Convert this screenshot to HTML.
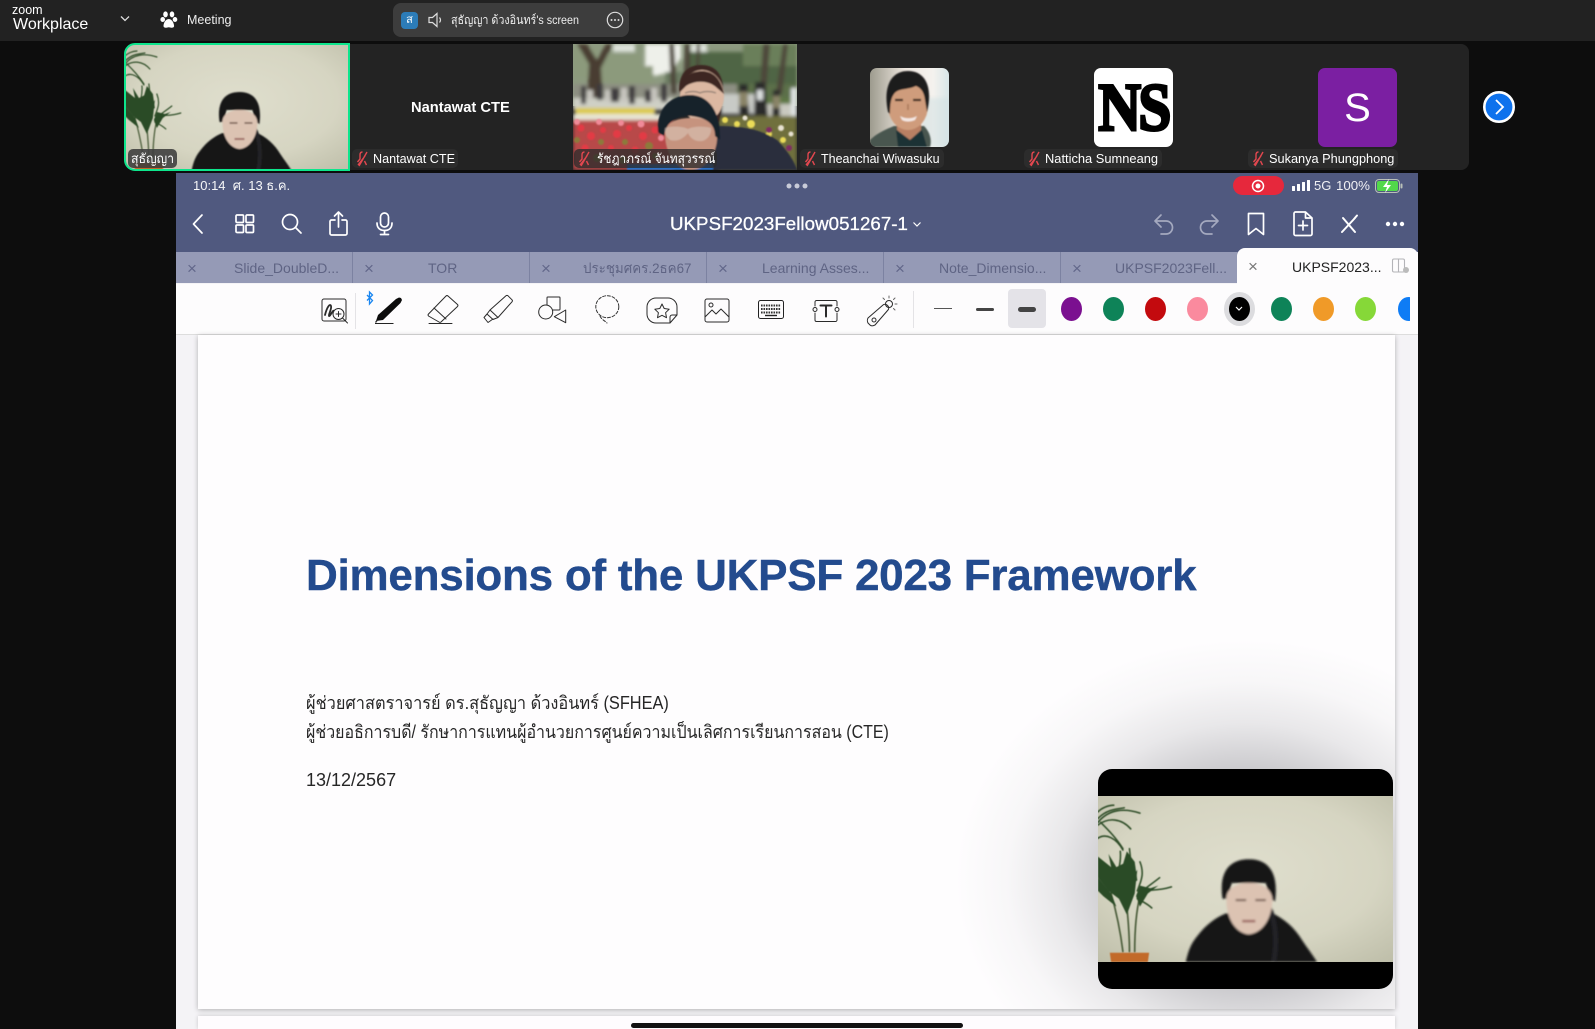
<!DOCTYPE html>
<html lang="en"><head><meta charset="utf-8"><title>Zoom Workplace</title>
<style>
*{box-sizing:border-box}
html,body{margin:0;padding:0;width:1595px;height:1029px;overflow:hidden;background:#0d0d0d;font-family:"Liberation Sans","Noto Sans CJK SC",sans-serif}
.a{position:absolute;white-space:nowrap}
svg{position:absolute;overflow:visible}
.lb{position:absolute;top:149px;height:19px;background:#2c2c2c;border-radius:5px;color:#fff;font-size:13px;line-height:19px;white-space:nowrap}
.lb svg{left:3px;top:2px}
.lb span{position:absolute;left:21px;top:0;transform-origin:left center}
.tab{position:absolute;top:252px;height:31px;width:177px;background:#959ab6;border-right:1px solid #7c82a1;color:#5f6484;font-size:14px;line-height:32px}
.tab i{position:absolute;left:11px;top:1px;font-style:normal;font-size:17px;color:#62678a}
.tab span{position:absolute;white-space:nowrap;top:0}
.dot{position:absolute;width:21px;height:24px;top:297px;border-radius:50%}
.ic{fill:none;stroke:#fff;stroke-width:1.7;stroke-linecap:round;stroke-linejoin:round}
.tb{fill:none;stroke:#2a2a2a;stroke-width:1;stroke-linecap:round;stroke-linejoin:round}
</style></head><body>
<svg width="0" height="0" style="position:absolute"><defs>
<radialGradient id="wall" cx=".5" cy=".45" r=".75"><stop offset="0" stop-color="#dfdecd"/><stop offset=".6" stop-color="#d6d5c2"/><stop offset="1" stop-color="#bdbda8"/></radialGradient>
<filter id="b1"><feGaussianBlur stdDeviation=".8"/></filter>
<filter id="b0"><feGaussianBlur stdDeviation=".45"/></filter>
<filter id="b2"><feGaussianBlur stdDeviation="1.900"/></filter>
<symbol id="video" viewBox="0 0 225 126" preserveAspectRatio="none">
<rect width="225" height="126" fill="url(#wall)"/>
<g filter="url(#b0)">
<g fill="none" stroke="#4d5f3c" stroke-width="1.300" stroke-linecap="round">
<path d="M19 118C17 102 14 88 10 74M24 118C24 104 23 94 22 84M28 118C28 102 29 88 32 76"/></g>
<g fill="none" stroke="#31502b" stroke-linecap="round" stroke-width="1.200">
<path d="M0 20C8 10 20 9 32 13M0 22C8 16 18 17 25 25M0 12C3 9 8 7 12 7M0 17C6 11 12 10 20 9M0 32C6 28 14 32 19 41M2 20C8 26 14 32 19 40"/>
<path d="M10 74C14 62 18 52 17 42M22 80C24 66 26 54 24 40M30 78C34 68 40 74 56 69M30 75C36 70 42 66 47 62M30 78C34 80 38 82 41 85M30 72C32 66 36 60 32 50"/></g>
<g fill="#2c4c27">
<path d="M0 46L10 54L8 44L14 54L22 50L26 62L30 56L28 74L22 90L16 78L8 72L0 62Z"/>
<path d="M0 62L10 74L14 84L4 76L0 72Z"/><path d="M22 42L28 50L30 64L24 68L19 52Z"/>
<path d="M32 68L40 70L46 68L38 74L32 84L29 76Z"/>
</g>
<path d="M9 119H39L38 126H10Z" fill="#c26b2b"/>
</g>
<g filter="url(#b1)">
<path d="M67 126C69 117 71 112 76 106C82 98 90 92 98 89L131 88C142 93 150 100 156 110C160 116 164 121 167 126Z" fill="#141416"/>
<path d="M130 84C137 98 136 115 134 126" stroke="#242426" stroke-width="4" fill="none"/>
<path d="M95 78C92 58 100 48 115 48C130 48 138 58 135 80L131 78L128 66H102L99 78Z" fill="#121214"/>
<path d="M98 76C99 70 106 66 115 66C125 66 132 70 133 78C133 92 126 104 115 105C104 104 97 91 98 76Z" fill="#dcc3b2"/>
<path d="M105 79h8M120 79h8" stroke="#6f574c" stroke-width="1.500"/>
<path d="M110 95h10" stroke="#a06d66" stroke-width="2"/>
</g>
</symbol>
</defs></svg>

<!-- top bar -->
<div class="a" style="left:0;top:0;width:1595px;height:41px;background:#222"></div>
<div class="a" style="left:12px;top:3px;color:#fff;font-size:12.500px;line-height:14px">zoom</div>
<div class="a" style="left:13px;top:15px;color:#fff;font-size:16px;line-height:20px">Workplace</div>
<svg style="left:119px;top:15px" width="12" height="8"><path d="M2 1.500l4 4 4-4" fill="none" stroke="#ddd" stroke-width="1.300"/></svg>
<svg style="left:160px;top:11px" width="19" height="18" fill="#fff"><ellipse cx="5.500" cy="3.400" rx="2.300" ry="3"/><ellipse cx="12" cy="3.400" rx="2.300" ry="3"/><ellipse cx="2.700" cy="8.500" rx="2.300" ry="2.500"/><ellipse cx="15" cy="8.500" rx="2.300" ry="2.500"/><path d="M8.800 8C5 8 3.500 13 3.500 15c0 2 3 2 5.300 1.300 2.300.7 5.300.7 5.300-1.300C14.100 13 12.500 8 8.800 8Z"/></svg>
<div class="a" style="left:187px;top:11px;color:#eee;font-size:12.500px;line-height:18px">Meeting</div>
<div class="a" style="left:393px;top:3px;width:236px;height:34px;background:#3d3d3d;border-radius:8px"></div>
<div class="a" style="left:401px;top:12px;width:17px;height:17px;background:#2c7cb8;border-radius:4px;color:#fff;font-size:11px;line-height:17px;text-align:center">ส</div>
<svg style="left:428px;top:12px" width="15" height="16"><path d="M1 5.500h3.500L9 1.500v13l-4.500-4H1Z M11.500 5.500c1.200 1.500 1.200 3.500 0 5" fill="none" stroke="#ddd" stroke-width="1.200"/></svg>
<div class="a" style="left:451px;top:11px;color:#eee;font-size:12px;line-height:18px;transform:scaleX(.895);transform-origin:left center">สุธัญญา ด้วงอินทร์'s screen</div>
<svg style="left:606px;top:11px" width="18" height="18"><circle cx="9" cy="9" r="7.700" fill="none" stroke="#ddd" stroke-width="1.200"/><circle cx="5.500" cy="9" r="1" fill="#ddd"/><circle cx="9" cy="9" r="1" fill="#ddd"/><circle cx="12.500" cy="9" r="1" fill="#ddd"/></svg>

<!-- strip -->
<div class="a" style="left:350px;top:44px;width:1119px;height:126px;background:#232323;border-radius:0 8px 8px 0"></div>
<svg style="left:125px;top:44px;border-radius:10px 0 0 10px;overflow:hidden" width="224" height="126"><use href="#video" width="224" height="126"/></svg>
<div class="a" style="left:124px;top:43px;width:226px;height:128px;border:2px solid #0de58c;border-radius:11px 0 0 11px"></div>
<div class="lb" style="left:128px;width:49px;background:rgba(60,60,60,.88)"><span style="left:3px;transform:scaleX(.95)">สุธัญญา</span></div>

<div class="a" style="left:411px;top:98px;color:#fff;font-size:14.700px;font-weight:bold;line-height:20px">Nantawat CTE</div>
<div class="lb" style="left:352px;width:106px"><svg width="15" height="16"><path d="M7.500 1c-2 0-2.500 1.500-2.500 3v4l-2.500 3M10 5L3 14M12 1L4 15M9.500 10l2 4" fill="none" stroke="#e2474f" stroke-width="1.400"/></svg><span style="left:21px;transform:scaleX(.97)">Nantawat CTE</span></div>

<!-- photo tile -->
<svg style="left:573px;top:44px" width="224" height="126" viewBox="0 0 224 126"><defs><clipPath id="c3"><rect width="224" height="126"/></clipPath></defs>
<g clip-path="url(#c3)"><rect width="224" height="62" fill="#8d9a80"/>
<g filter="url(#b2)">
<path d="M72 0h36v14l-10 14-16 4-10-10Z" fill="#eef0ea"/><path d="M118 0h16v10h-16ZM40 0h22v8H40Z" fill="#dde2da"/>
<path d="M0 4h24v30H0ZM26 10h42v28H26ZM38 22h42v22H38Z" fill="#8c9a7c"/><path d="M116 8h108v38H116Z" fill="#4f6544"/><path d="M170 0h54v22h-54Z" fill="#6b7f5a"/><path d="M92 28h24v18H92Z" fill="#6c7b62"/>
<rect y="40" width="224" height="14" fill="#8d8f82"/><rect x="164" y="40" width="60" height="14" fill="#5c6f4a"/>
<path d="M4 0L16 20L14 58H30L28 24L40 0H33L24 16L14 0Z" fill="#4a3d32"/><path d="M96 0h5l3 50h-6ZM112 0h5l1 52h-8ZM124 0h3l-1 40h-4ZM190 0h7l-4 48h-6ZM210 0h5l-6 50h-6Z" fill="#4d463a"/>
<rect y="54" width="100" height="12" fill="#cfd0c6"/><rect x="148" y="50" width="40" height="20" fill="#c8cac6"/><rect x="186" y="54" width="38" height="12" fill="#5e7845"/><rect x="190" y="60" width="34" height="14" fill="#c9c9c0"/>
<path d="M8 42h5v18H8ZM24 40h6v16H24ZM38 44h8v14H38ZM56 42h6v18H56ZM72 46h6v12H72ZM88 40h6v18H88Z" fill="#3c3b3e"/>
<path d="M14 46h6v10H14ZM32 46h5v12H32ZM48 44h6v14H48ZM78 44h6v14H78Z" fill="#c8c6c0"/>
<path d="M166 40h9v16l2 18h-11ZM182 38h10l3 34h-14ZM200 46h7v28h-8Z" fill="#2a2a2c"/><path d="M166 48h9v14h-9ZM200 52h7v12h-7Z" fill="#8a8468"/><path d="M184 46h6v10h-6ZM218 44h6v30h-6Z" fill="#dfe3e2"/>
<path d="M2 64h80v7H2Z" fill="#dcc945"/><rect y="70" width="92" height="8" fill="#e8e6d6"/>
<rect y="76" width="100" height="50" fill="#b8484a"/>
<rect x="145" y="72" width="79" height="54" fill="#6f6f3c"/>
</g>
<g filter="url(#b1)">
<g fill="#e23a44"><circle cx="8" cy="84" r="3.500"/><circle cx="18" cy="92" r="4"/><circle cx="30" cy="86" r="3"/><circle cx="44" cy="90" r="4"/><circle cx="56" cy="84" r="3"/><circle cx="70" cy="92" r="4"/><circle cx="82" cy="86" r="3.500"/><circle cx="12" cy="104" r="3.500"/><circle cx="38" cy="104" r="3"/><circle cx="62" cy="106" r="3.500"/></g>
<g fill="#f08a98"><circle cx="4" cy="78" r="3"/><circle cx="26" cy="78" r="3"/><circle cx="48" cy="79" r="3"/><circle cx="68" cy="80" r="3.500"/><circle cx="88" cy="80" r="3"/><circle cx="88" cy="94" r="3"/></g>
<g fill="#8c7a3a"><circle cx="28" cy="98" r="3"/><circle cx="52" cy="98" r="3"/><circle cx="76" cy="102" r="4"/><circle cx="4" cy="96" r="3"/><circle cx="24" cy="114" r="4"/><circle cx="50" cy="116" r="4"/><circle cx="82" cy="112" r="3"/></g>
<g fill="#eadb58"><circle cx="152" cy="76" r="3"/><circle cx="164" cy="80" r="3"/><circle cx="178" cy="80" r="4"/><circle cx="196" cy="90" r="3"/><circle cx="210" cy="96" r="3"/><circle cx="186" cy="94" r="2.500"/></g>
<g fill="#7f2c64"><circle cx="190" cy="100" r="3.500"/><circle cx="206" cy="106" r="4"/><circle cx="216" cy="104" r="3"/><circle cx="196" cy="86" r="3"/></g>
<g fill="#e8e2d2"><circle cx="172" cy="74" r="2.500"/><circle cx="208" cy="84" r="3"/><circle cx="218" cy="90" r="2.500"/></g>
<path d="M106 46C106 28 116 21 128 21C144 21 152 32 150 54L146 78L110 62Z" fill="#3c2620"/>
<ellipse cx="129" cy="52" rx="22" ry="26" fill="#dcb8a2"/>
<path d="M107 48C110 32 118 27 130 27C142 28 148 36 151 50L144 44C136 36 122 36 113 42Z" fill="#3c2620"/>
<path d="M112 49c5-2 11-2 15 0 4-2 11-2 16 0" stroke="#8a7a70" stroke-width="1.200" fill="none"/>
<path d="M144 82C166 82 186 84 204 96C214 106 222 118 224 126H100Z" fill="#2a2e3e"/>
<rect x="54" y="120" width="86" height="6" fill="#2c71c8"/>
<path d="M92 90C92 78 104 74 118 74C132 74 144 78 144 94C144 108 134 126 118 126C102 126 92 108 92 90Z" fill="#c6937e"/>
<path d="M85 88C83 64 98 51 117 51C136 51 148 68 147 96L142 92C142 80 134 74 118 72C104 72 94 76 91 92Z" fill="#14202c"/>
<path d="M92 84c5-2 18-2 23 1 5-3 17-3 23-1 1 5-3 12-9 13-7 1-12-3-14-8-5 6-11 9-18 7-4-3-6-8-5-12Z" fill="#dccabb" opacity=".55"/>
</g></g></svg>
<div class="lb" style="left:574px;width:143px;background:rgba(44,44,44,.78)"><svg width="15" height="16"><path d="M7.500 1c-2 0-2.500 1.500-2.500 3v4l-2.500 3M10 5L3 14M12 1L4 15M9.500 10l2 4" fill="none" stroke="#e2474f" stroke-width="1.400"/></svg><span style="left:23px;transform:scaleX(.915)">รัชฎาภรณ์ จันทสุวรรณ์</span></div>

<!-- avatars -->
<svg style="left:870px;top:68px;border-radius:7px;overflow:hidden" width="79" height="79" viewBox="0 0 79 79"><defs><linearGradient id="pbg" x1="0" x2="1"><stop offset="0" stop-color="#9d9b8e"/><stop offset=".45" stop-color="#efe8e0"/><stop offset=".8" stop-color="#f4f2ee"/><stop offset="1" stop-color="#d8e6e8"/></linearGradient></defs><rect width="79" height="79" fill="url(#pbg)"/><path d="M52 30H79V79H52Z" fill="#cfe0e2" opacity=".5" filter="url(#b2)"/><g filter="url(#b1)"><path d="M0 72C6 66 14 62 24 58L54 58C60 64 62 72 60 79H0Z" fill="#4a5650"/><path d="M27 52h24v10L40 72 27 62Z" fill="#b98064"/><path d="M26 62l14 10 12-10 5 17H28Z" fill="#1e3034"/><ellipse cx="38" cy="38" rx="20" ry="24" fill="#cf9c7c"/><path d="M18 44C13 20 20 3 38 3C56 3 63 20 57 44L55 32C54 24 51 20 46 18C38 22 28 20 24 26C21 30 20 36 20 46Z" fill="#1f1a1c"/><path d="M25 32h8M43 32h8" stroke="#3c2a22" stroke-width="2.200"/><path d="M30 48c5 3 12 3 17 0l-2 4c-4 2-10 2-13 0Z" fill="#f4e8e4"/><path d="M38 36v6" stroke="#a87658" stroke-width="1.500"/></g></svg>
<div class="a" style="left:1094px;top:68px;width:79px;height:79px;background:#fff;border-radius:7px;overflow:hidden;color:#000;font-family:'Liberation Serif',serif;font-weight:bold;font-size:68px;line-height:78px;text-align:center;letter-spacing:-3px;-webkit-text-stroke:3px #000"><span style="display:inline-block;transform:scaleX(.87);transform-origin:center;margin-left:-10px;margin-right:-10px">NS</span></div>
<div class="a" style="left:1318px;top:68px;width:79px;height:79px;background:#7b1fa2;border-radius:7px;color:#fff;font-size:40px;line-height:81px;text-align:center">S</div>
<div class="lb" style="left:800px;width:144px"><svg width="15" height="16"><path d="M7.500 1c-2 0-2.500 1.500-2.500 3v4l-2.500 3M10 5L3 14M12 1L4 15M9.500 10l2 4" fill="none" stroke="#e2474f" stroke-width="1.400"/></svg><span style="transform:scaleX(.96)">Theanchai Wiwasuku</span></div>
<div class="lb" style="left:1024px;width:138px"><svg width="15" height="16"><path d="M7.500 1c-2 0-2.500 1.500-2.500 3v4l-2.500 3M10 5L3 14M12 1L4 15M9.500 10l2 4" fill="none" stroke="#e2474f" stroke-width="1.400"/></svg><span style="transform:scaleX(.99)">Natticha Sumneang</span></div>
<div class="lb" style="left:1248px;width:150px"><svg width="15" height="16"><path d="M7.500 1c-2 0-2.500 1.500-2.500 3v4l-2.500 3M10 5L3 14M12 1L4 15M9.500 10l2 4" fill="none" stroke="#e2474f" stroke-width="1.400"/></svg><span style="transform:scaleX(.98)">Sukanya Phungphong</span></div>
<svg style="left:1483px;top:91px" width="32" height="32"><circle cx="16" cy="16" r="14.700" fill="#0e72ed" stroke="#fff" stroke-width="2.600"/><path d="M13 9l7 7-7 7" fill="none" stroke="#fff" stroke-width="1.800"/></svg>

<!-- iPad -->
<div class="a" style="left:176px;top:173px;width:1242px;height:856px;background:#f4f3f6;overflow:hidden"></div>
<div class="a" style="left:176px;top:173px;width:1242px;height:79px;background:#50597f"></div>
<div class="a" style="left:193px;top:177px;color:#fff;font-size:13px;line-height:18px;opacity:.95">10:14 &nbsp;ศ. 13 ธ.ค.</div>
<svg style="left:785px;top:183px" width="24" height="6" fill="#c8cbd8"><circle cx="4" cy="3" r="2.500"/><circle cx="12" cy="3" r="2.500"/><circle cx="20" cy="3" r="2.500"/></svg>
<div class="a" style="left:1233px;top:176px;width:50.500px;height:19px;background:#e6283c;border-radius:10px"></div>
<svg style="left:1250px;top:178px" width="16" height="16"><circle cx="8" cy="8" r="5.500" fill="none" stroke="#fff" stroke-width="1.500"/><circle cx="8" cy="8" r="2.500" fill="#fff"/></svg>
<svg style="left:1292px;top:180px" width="18" height="11" fill="#fff"><rect y="6" width="3" height="5" rx=".5"/><rect x="5" y="4" width="3" height="7" rx=".5"/><rect x="10" y="2" width="3" height="9" rx=".5"/><rect x="15" y="0" width="3" height="11" rx=".5"/></svg>
<div class="a" style="left:1314px;top:177px;color:#f0f0f4;font-size:13px;line-height:18px">5G</div>
<div class="a" style="left:1336px;top:177px;color:#f0f0f4;font-size:13.300px;line-height:18px">100%</div>
<svg style="left:1375px;top:179px" width="28" height="14"><rect x=".5" y=".5" width="24" height="13" rx="3.500" fill="none" stroke="#b9c0b8"/><rect x="2" y="2" width="21" height="10" rx="2" fill="#52d84a"/><rect x="25.500" y="4.500" width="2" height="5" rx="1" fill="#b9c0b8"/><path d="M14 0L8 8h4l-2 6 6-8h-4Z" fill="#fff"/></svg>

<!-- nav icons -->
<svg class="ic" style="left:191px;top:212px" width="16" height="24"><path d="M11 3L2.500 12 11 21"/></svg>
<svg class="ic" style="left:235px;top:214px" width="20" height="20"><rect x="1" y="1" width="7.500" height="7.500" rx="1"/><rect x="11" y="1" width="7.500" height="7.500" rx="1"/><rect x="1" y="11" width="7.500" height="7.500" rx="1"/><rect x="11" y="11" width="7.500" height="7.500" rx="1"/></svg>
<svg class="ic" style="left:281px;top:213px" width="22" height="22"><circle cx="9" cy="9" r="7.500"/><path d="M14.500 14.500L20 20"/></svg>
<svg class="ic" style="left:329px;top:211px" width="20" height="26"><path d="M6 9H2.500A1.500 1.500 0 0 0 1 10.500v12A1.500 1.500 0 0 0 2.500 24h14a1.500 1.500 0 0 0 1.500-1.500v-12A1.500 1.500 0 0 0 16.500 9H13M9.500 16V1M5.500 5l4-4 4 4"/></svg>
<svg class="ic" style="left:376px;top:212px" width="17" height="24"><rect x="4.500" y="1" width="8" height="14" rx="4"/><path d="M1 11c0 5 3 7.500 7.500 7.500S16 16 16 11M8.500 18.500V22M4.500 22.500h8"/></svg>
<div class="a" style="left:670px;top:213px;color:#fff;font-size:18.700px;line-height:22px;letter-spacing:.05px;-webkit-text-stroke:.3px #fff">UKPSF2023Fellow051267-1</div>
<svg style="left:912px;top:221px" width="10" height="7"><path d="M1.500 1.500L5 5l3.500-3.500" fill="none" stroke="#fff" stroke-width="1.200"/></svg>
<svg style="left:1153px;top:212px;fill:none;stroke:#a4a9bf;stroke-width:1.700;stroke-linecap:round;stroke-linejoin:round" width="22" height="24"><path d="M8 3L2 9l6 6M2 9h11a6.500 6.500 0 0 1 0 13H8"/></svg>
<svg style="left:1198px;top:212px;fill:none;stroke:#a4a9bf;stroke-width:1.700;stroke-linecap:round;stroke-linejoin:round" width="22" height="24"><path d="M14 3l6 6-6 6M20 9H9a6.500 6.500 0 0 0 0 13h5"/></svg>
<svg class="ic" style="left:1247px;top:212px" width="18" height="24"><path d="M1.500 1.500h15v21l-7.500-6-7.500 6Z"/></svg>
<svg class="ic" style="left:1293px;top:211px" width="20" height="26"><path d="M2.500 1h10L19 7v16a1.500 1.500 0 0 1-1.500 1.500h-15A1.500 1.500 0 0 1 1 23V2.500A1.500 1.500 0 0 1 2.500 1ZM12.500 1v6H19M10 10v9M5.500 14.500h9"/></svg>
<svg class="ic" style="left:1339px;top:213px;stroke-width:2" width="20" height="22"><path d="M3 19L16 5M4 5l12 14M15 6l3-3.500"/></svg>
<svg style="left:1385px;top:221px" width="20" height="6" fill="#fff"><circle cx="3" cy="3" r="2.200"/><circle cx="10" cy="3" r="2.200"/><circle cx="17" cy="3" r="2.200"/></svg>

<!-- tabs -->
<div class="tab" style="left:176px"><i>×</i><span style="left:58px">Slide_DoubleD...</span></div>
<div class="tab" style="left:353px"><i>×</i><span style="left:75px">TOR</span></div>
<div class="tab" style="left:530px"><i>×</i><span style="left:53px;transform:scaleX(.955);transform-origin:left center">ประชุมศคร.2ธค67</span></div>
<div class="tab" style="left:707px"><i>×</i><span style="left:55px">Learning Asses...</span></div>
<div class="tab" style="left:884px"><i>×</i><span style="left:55px">Note_Dimensio...</span></div>
<div class="tab" style="left:1061px"><i>×</i><span style="left:54px">UKPSF2023Fell...</span></div>
<div class="a" style="left:1237px;top:248px;width:181px;height:36px;background:#fdfcfd;border-radius:8px 8px 0 0;color:#222;font-size:14px;line-height:32px"><i style="position:absolute;left:11px;top:3px;font-style:normal;font-size:17px;color:#777">×</i><span style="position:absolute;left:55px;top:3px">UKPSF2023...</span></div>
<svg style="left:1392px;top:258px;fill:none;stroke:#b4b4b8;stroke-width:1.100" width="18" height="16"><rect x=".5" y="1" width="12" height="13" rx="1.500"/><path d="M6.500 1v13"/><circle cx="14" cy="12" r="3" fill="#bbb" stroke="none"/></svg>

<!-- toolbar -->
<div class="a" style="left:176px;top:284px;width:1242px;height:51px;background:#fdfcfd;border-bottom:1px solid #ddd;overflow:hidden"></div>
<svg class="tb" style="left:321px;top:298px" width="28" height="26"><rect x="1" y="1" width="24" height="22" rx="2"/><path d="M4 17c2-8 5-12 6-9 1 3-3 9-2 10s4-7 5-5" stroke-width="1.800"/><circle cx="17.500" cy="16" r="5.500" fill="#fdfcfd"/><path d="M21.500 20l5 5M15 16h5M17.500 13.500v5"/></svg>
<div class="a" style="left:355px;top:293px;width:1px;height:36px;background:#e4e3e6"></div>
<svg style="left:366px;top:291px" width="8" height="14" fill="none" stroke="#1a86f0" stroke-width="1.300"><path d="M1 4l5.500 5.500L3.500 13V1l3 3L1 9.500"/></svg>
<!-- pen -->
<svg style="left:373px;top:295px" width="30" height="32"><path d="M3 26L5 20 23 4l3-1.500 2 .5 1 2-1.500 3L10 25Z" fill="#0c0c0c"/><path d="M2 28.500h18.500" stroke="#222" stroke-width="1.100"/><path d="M2.500 27.500l1.500-2" stroke="#333" stroke-width="1.400"/></svg>
<!-- eraser -->
<svg class="tb" style="left:427px;top:294px" width="32" height="32"><path d="M1.500 20L19 2a1.500 1.500 0 0 1 2 0l9.500 8.500a1.500 1.500 0 0 1 0 2L14 28c-.6.500-1.400.5-2 0l-10.500-6a1.500 1.500 0 0 1 0-2ZM7 14l12 11M2 29.500h23"/></svg>
<!-- highlighter -->
<svg class="tb" style="left:483px;top:294px" width="32" height="32"><path d="M23 1.800a1.500 1.500 0 0 1 2 0l4 4a1.500 1.500 0 0 1 0 2L15 23.500l-8-7.500ZM7 16l-3 4 6 5.500 5-2M4 20l-3 3.500 4 5 5-3.500"/></svg>
<!-- shapes -->
<svg class="tb" style="left:537px;top:296px" width="32" height="30"><rect x="10" y="1" width="13" height="13" rx=".7"/><circle cx="8.700" cy="16" r="7" fill="#fdfcfd"/><path d="M28.700 14v12.700L17.300 20.700Z"/></svg>
<!-- lasso -->
<svg class="tb" style="left:595px;top:294px;stroke-dasharray:3 1.800;stroke:#333" width="26" height="32"><ellipse cx="12.300" cy="12.700" rx="11.500" ry="11"/><path d="M5 22c1 3 5 5 7 7"/></svg>
<svg class="tb" style="left:646px;top:297px" width="32" height="28"><path d="M10 1h12a9 9 0 0 1 9 9v8l-7 8H10a9 9 0 0 1-9-9v-7a9 9 0 0 1 9-9ZM24 26v-6c0-1 1-2 2-2h5"/><path d="M16 7l2.200 4.500 5 .7-3.600 3.500.9 5-4.500-2.400-4.500 2.400.9-5-3.600-3.500 5-.7Z"/></svg>
<svg class="tb" style="left:704px;top:298px" width="26" height="26"><rect x="1" y="1" width="24" height="23" rx="2"/><circle cx="7" cy="7" r="2"/><path d="M1 19l7-7 4 4 5-5 8 8"/></svg>
<svg style="left:758px;top:300px" width="27" height="20"><rect x=".5" y=".5" width="25" height="18" rx="2" fill="#fdfcfd" stroke="#222"/><path d="M3 5.500h20M3 9h20M3 12.500h20" stroke="#333" stroke-width="2" stroke-dasharray="1.600 .9"/><path d="M7 15.500h12" stroke="#222" stroke-width="1.400"/></svg>
<svg class="tb" style="left:812px;top:299px" width="28" height="24"><path d="M3 7V3a1.500 1.500 0 0 1 1.500-1.500h19A1.500 1.500 0 0 1 25 3v4M25 14v7a1.500 1.500 0 0 1-1.500 1.500h-19A1.500 1.500 0 0 1 3 21v-7"/><circle cx="3" cy="10.500" r="2"/><circle cx="25" cy="10.500" r="2"/><path d="M8.500 6.500h11M14 6.500v11" stroke-width="2"/></svg>
<svg class="tb" style="left:866px;top:295px" width="32" height="34"><path d="M2 23L17 10c1-1 3-1 4 0l1 1c1 1 1 3 0 4L9 30c-2 1-4 1-5 0l-2-2c-1-2-1-3 0-5Z"/><circle cx="8" cy="25" r="2"/><circle cx="23" cy="9" r="3.500"/><path d="M23 1v2M29 3l-1.500 1.500M31 9h-2M29 15l-1.500-1.500M17 3l1.500 1.500" stroke="#666"/></svg>
<div class="a" style="left:913px;top:291px;width:1px;height:37px;background:#e4e3e6"></div>
<div class="a" style="left:934px;top:308px;width:18px;height:1px;background:#555"></div>
<div class="a" style="left:976px;top:307.500px;width:18px;height:3px;border-radius:2px;background:#444"></div>
<div class="a" style="left:1008px;top:289px;width:38px;height:39px;background:#e4e3e8;border-radius:4px"></div>
<div class="a" style="left:1018px;top:306.500px;width:18px;height:5px;border-radius:3px;background:#444"></div>
<div class="dot" style="left:1061px;background:#7b1090"></div>
<div class="dot" style="left:1103px;background:#0e8358"></div>
<div class="dot" style="left:1145px;background:#c30a0e"></div>
<div class="dot" style="left:1187px;background:#fa8a9e"></div>
<div class="a" style="left:1224px;top:292px;width:31px;height:34px;border-radius:50%;background:#dcdcdf"></div>
<div class="dot" style="left:1229px;background:#000"></div>
<svg style="left:1235px;top:306px" width="8" height="6"><path d="M1 1l3 3 3-3" fill="none" stroke="#fff" stroke-width="1.200"/></svg>
<div class="dot" style="left:1271px;background:#0e8358"></div>
<div class="dot" style="left:1313px;background:#f09a28"></div>
<div class="dot" style="left:1355px;background:#86d838"></div>
<div class="a" style="left:1398px;top:297px;width:12px;height:24px;overflow:hidden"><div style="width:21px;height:24px;border-radius:50%;background:#0e7cf5"></div></div>

<!-- page -->
<div class="a" style="left:198px;top:335px;width:1197px;height:674px;background:radial-gradient(ellipse 290px 240px at 1047px 544px,rgba(88,88,96,.34) 0%,rgba(88,88,96,.3) 46%,rgba(88,88,96,.13) 65%,rgba(88,88,96,.04) 82%,rgba(88,88,96,0) 100%),#fefdfe;box-shadow:0 1px 5px rgba(0,0,0,.28)"></div>
<div class="a" style="left:198px;top:1016px;width:1197px;height:13px;background:#fefcfe;box-shadow:0 0 4px rgba(0,0,0,.18)"></div>
<div class="a" style="left:631px;top:1023px;width:332px;height:5px;background:#111;border-radius:3px"></div>
<div class="a" style="left:306px;top:548px;color:#234b8e;font-size:44px;font-weight:bold;line-height:56px;letter-spacing:-.25px;-webkit-text-stroke:.4px #234b8e">Dimensions of the UKPSF 2023 Framework</div>
<div class="a" style="left:306px;top:691px;color:#262626;font-size:18px;line-height:24px;transform:scaleX(.908);transform-origin:left center">ผู้ช่วยศาสตราจารย์ ดร.สุธัญญา ด้วงอินทร์ (SFHEA)</div>
<div class="a" style="left:306px;top:720px;color:#262626;font-size:18px;line-height:24px;transform:scaleX(.887);transform-origin:left center">ผู้ช่วยอธิการบดี/ รักษาการแทนผู้อำนวยการศูนย์ความเป็นเลิศการเรียนการสอน (CTE)</div>
<div class="a" style="left:306px;top:768px;color:#262626;font-size:18px;line-height:24px">13/12/2567</div>

<!-- PIP -->
<div class="a" style="left:1098px;top:769px;width:295px;height:220px;background:#000;border-radius:14px;overflow:hidden"><svg style="left:0;top:27px" width="295" height="166"><use href="#video" width="295" height="166"/></svg></div>
</body></html>
